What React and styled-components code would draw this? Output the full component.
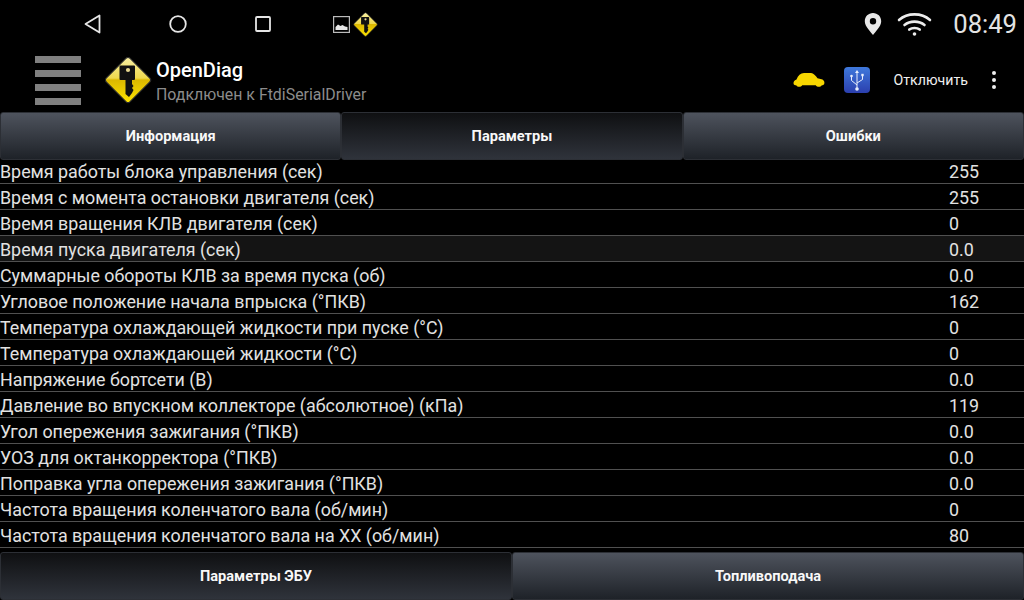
import { useId } from "react";
import styled, { createGlobalStyle } from "styled-components";

const params = [
  ["Время работы блока управления (сек)", "255"],
  ["Время с момента остановки двигателя (сек)", "255"],
  ["Время вращения КЛВ двигателя (сек)", "0"],
  ["Время пуска двигателя (сек)", "0.0", true],
  ["Суммарные обороты КЛВ за время пуска (об)", "0.0"],
  ["Угловое положение начала впрыска (°ПКВ)", "162"],
  ["Температура охлаждающей жидкости при пуске (°С)", "0"],
  ["Температура охлаждающей жидкости (°С)", "0"],
  ["Напряжение бортсети (В)", "0.0"],
  ["Давление во впускном коллекторе (абсолютное) (кПа)", "119"],
  ["Угол опережения зажигания (°ПКВ)", "0.0"],
  ["УОЗ для октанкорректора (°ПКВ)", "0.0"],
  ["Поправка угла опережения зажигания (°ПКВ)", "0.0"],
  ["Частота вращения коленчатого вала (об/мин)", "0"],
  ["Частота вращения коленчатого вала на ХХ (об/мин)", "80"],
];

const GlobalStyle = createGlobalStyle`
  html, body {
    margin: 0;
    padding: 0;
    background: #000;
  }
`;

const Screen = styled.div`
  width: 1024px;
  height: 600px;
  overflow: hidden;
  display: flex;
  flex-direction: column;
  background: #000;
  color: #fff;
  font-family: Roboto, "Liberation Sans", sans-serif;
`;

const StatusBar = styled.div`
  height: 48px;
  flex: none;
  display: flex;
  align-items: center;
  padding: 0 7px 0 84px;
  box-sizing: border-box;
`;

const NavGroup = styled.div`
  display: flex;
  align-items: center;
  gap: 68px;
`;

const Notifications = styled.div`
  display: flex;
  align-items: center;
  gap: 3px;
  margin-left: 62px;
`;

const StatusRight = styled.div`
  margin-left: auto;
  display: flex;
  align-items: center;
  gap: 15px;
`;

const Clock = styled.span`
  font-size: 25.6px;
  color: #e4e4e4;
  margin-left: 6px;
  line-height: 28px;
`;

const ActionBar = styled.div`
  height: 64px;
  flex: none;
  display: flex;
  align-items: center;
  padding: 0 28px 0 35px;
  box-sizing: border-box;
`;

const Burger = styled.div`
  width: 46px;
  display: flex;
  flex-direction: column;
  gap: 7px;
  margin-right: 23px;
`;

const BurgerBar = styled.div`
  height: 7px;
  background: #808080;
`;

const TitleBlock = styled.div`
  display: flex;
  flex-direction: column;
  margin-left: 4px;
  padding-top: 4px;
`;

const AppTitle = styled.div`
  font-size: 20px;
  font-weight: 500;
  line-height: 24px;
  color: #fff;
`;

const AppSubtitle = styled.div`
  font-size: 15.9px;
  line-height: 25px;
  color: #8c8c8c;
`;

const Actions = styled.div`
  margin-left: auto;
  display: flex;
  align-items: center;
  gap: 19px;
`;

const DisconnectLabel = styled.span`
  font-size: 14.2px;
  color: #f0f0f0;
  margin: 0 5px;
`;

const TabRow = styled.div`
  height: 48px;
  flex: none;
  display: grid;
  grid-template-columns: ${(p) => `repeat(${p.$count}, 1fr)`};
`;

const Tab = styled.div`
  display: flex;
  align-items: center;
  justify-content: center;
  border: 1px solid #2c2f35;
  border-radius: 3px;
  font-size: 14.6px;
  font-weight: 700;
  color: #f8f8f8;
  background: ${(p) =>
    p.$active
      ? "linear-gradient(to bottom, #0f1012, #2f333b)"
      : "linear-gradient(to bottom, #4e535d, #1e2228)"};
`;

const ParamList = styled.div`
  height: 388px;
  flex: none;
  overflow: hidden;
  display: flex;
  flex-direction: column;
  justify-content: flex-end;
  margin-bottom: 4px;
`;

const ParamRow = styled.div`
  height: 26px;
  flex: none;
  box-sizing: border-box;
  display: flex;
  align-items: center;
  padding-top: 1px;
  border-bottom: 1px solid #505050;
  background: ${(p) => (p.$highlight ? "#141414" : "transparent")};
  font-size: 17.85px;
  color: #e2e2e2;
  white-space: nowrap;
`;

const ParamName = styled.span`
  flex: 1;
`;

const ParamValue = styled.span`
  width: 75px;
`;

const DotsColumn = styled.div`
  display: flex;
  flex-direction: column;
  gap: 3px;
`;

const Dot = styled.div`
  width: 4px;
  height: 4px;
  border-radius: 50%;
  background: #eee;
`;

const KeyLogo = ({ size }) => {
  const id = useId();
  return (
    <svg width={size} height={size} viewBox="0 0 48 48">
      <defs>
        <linearGradient id={id} x1="0" y1="0" x2="1" y2="1">
          <stop offset="0" stopColor="#f7efa8" />
          <stop offset="0.46" stopColor="#efd94e" />
          <stop offset="0.5" stopColor="#dcb800" />
          <stop offset="1" stopColor="#ffe600" />
        </linearGradient>
      </defs>
      <rect x="7.2" y="7.2" width="33.6" height="33.6" rx="3" transform="rotate(45 24 24)" fill={`url(#${id})`} stroke="#2a2a2a" strokeWidth="1.2" />
      <path d="M15.5 10.5 Q15.5 9.5 16.5 9.5 H30 Q31 9.5 31 10.5 V23 Q31 24 30 24 H28 V28 L29.5 30 L28 32 L29.5 34 L28 37 L25 41 L21.5 38 V24 H16.5 Q15.5 24 15.5 23 Z" fill="#111" />
      <circle cx="24" cy="14" r="2.1" fill="#e8d890" />
    </svg>
  );
};

const BackIcon = () => (
  <svg width="17" height="20" viewBox="0 0 17 20">
    <path d="M15.5 1.5 V18.5 L1.5 10 Z" fill="none" stroke="#e6e6e6" strokeWidth="1.8" strokeLinejoin="round" />
  </svg>
);

const HomeIcon = () => (
  <svg width="18" height="18" viewBox="0 0 18 18">
    <circle cx="9" cy="9" r="7.8" fill="none" stroke="#e6e6e6" strokeWidth="1.8" />
  </svg>
);

const RecentIcon = () => (
  <svg width="16" height="16" viewBox="0 0 16 16">
    <rect x="1" y="1" width="14" height="14" rx="1" fill="none" stroke="#e6e6e6" strokeWidth="1.8" />
  </svg>
);

const PictureIcon = () => (
  <svg width="17" height="17" viewBox="0 0 17 17">
    <rect x="0.6" y="0.6" width="15.8" height="15.8" fill="none" stroke="#bbb" strokeWidth="1.2" />
    <path d="M2.5 14 V11 L5 8.5 L7.5 10 L9.5 9 L12 10.5 L14.5 11 V14 Z" fill="#e8e8e8" />
  </svg>
);

const PinIcon = () => (
  <svg width="18" height="24" viewBox="0 0 18 24">
    <path fillRule="evenodd" fill="#e8e8e8" d="M9 1 C4.3 1 .8 4.6 .8 9.2 C.8 14.5 6.6 19.6 9 23 C11.4 19.6 17.2 14.5 17.2 9.2 C17.2 4.6 13.7 1 9 1 Z M9 6 A3.2 3.2 0 1 1 9 12.4 A3.2 3.2 0 1 1 9 6 Z" />
  </svg>
);

const WifiIcon = () => (
  <svg width="35" height="24" viewBox="0 0 34 24" fill="none" stroke="#ececec" strokeWidth="2.6" strokeLinecap="round">
    <path d="M1.5 8 C10 0.5 24 0.5 32.5 8" />
    <path d="M7 13 C12.5 8.5 21.5 8.5 27 13" />
    <path d="M11.8 17.6 C14.5 15.4 19.5 15.4 22.2 17.6" />
    <circle cx="17" cy="22" r="1.8" fill="#ececec" stroke="none" />
  </svg>
);

const CarIcon = () => (
  <svg width="32" height="16" viewBox="0 0 32 16">
    <path d="M.6 12 C.2 10 1.2 8.4 3.5 7.6 C5 3.5 7.5 1.2 11 1 H18 C20.5 1.2 22.5 3.5 24.5 6.2 L29.5 7.4 C31.2 8.4 31.8 10.4 31.2 12 C30.8 13 29.8 13.2 28.8 13.2 C27.6 15.4 24 15.4 22.8 13.2 H9.2 C8 15.4 4.4 15.4 3.2 13.2 C2 13.2 .9 13 .6 12 Z" fill="#f7d600" />
  </svg>
);

const UsbIcon = () => {
  const id = useId();
  return (
    <svg width="26" height="26" viewBox="0 0 26 26">
      <defs>
        <linearGradient id={id} x1="0" y1="0" x2="0" y2="1">
          <stop offset="0" stopColor="#3f79dc" />
          <stop offset="1" stopColor="#2b3fae" />
        </linearGradient>
      </defs>
      <rect width="26" height="26" rx="4" fill={`url(#${id})`} />
      <g stroke="#e8eefc" strokeWidth="1" fill="none">
        <path d="M13 5 V22" />
        <path d="M13 18 L7.5 13.5 V10" />
        <path d="M13 16 L18.5 12.5 V9" />
      </g>
      <path d="M13 3 L15 6 H11 Z" fill="#e8eefc" />
      <circle cx="7.5" cy="9" r="1.3" fill="#e8eefc" />
      <rect x="17.3" y="6.8" width="2.4" height="2.4" fill="#e8eefc" />
      <circle cx="13" cy="22" r="1.8" fill="#e8eefc" />
    </svg>
  );
};

const App = () => {
  return (
    <Screen>
      <GlobalStyle />
      <StatusBar>
        <NavGroup>
          <BackIcon />
          <HomeIcon />
          <RecentIcon />
        </NavGroup>
        <Notifications>
          <PictureIcon />
          <KeyLogo size={25} />
        </Notifications>
        <StatusRight>
          <PinIcon />
          <WifiIcon />
          <Clock>08:49</Clock>
        </StatusRight>
      </StatusBar>
      <ActionBar>
        <Burger>
          <BurgerBar />
          <BurgerBar />
          <BurgerBar />
          <BurgerBar />
        </Burger>
        <KeyLogo size={48} />
        <TitleBlock>
          <AppTitle>OpenDiag</AppTitle>
          <AppSubtitle>Подключен к FtdiSerialDriver</AppSubtitle>
        </TitleBlock>
        <Actions>
          <CarIcon />
          <UsbIcon />
          <DisconnectLabel>Отключить</DisconnectLabel>
          <DotsColumn>
            <Dot />
            <Dot />
            <Dot />
          </DotsColumn>
        </Actions>
      </ActionBar>
      <TabRow $count={3}>
        <Tab>Информация</Tab>
        <Tab $active>Параметры</Tab>
        <Tab>Ошибки</Tab>
      </TabRow>
      <ParamList>
        {params.map(([name, value, highlight]) => (
          <ParamRow key={name} $highlight={highlight}>
            <ParamName>{name}</ParamName>
            <ParamValue>{value}</ParamValue>
          </ParamRow>
        ))}
      </ParamList>
      <TabRow $count={2}>
        <Tab $active>Параметры ЭБУ</Tab>
        <Tab>Топливоподача</Tab>
      </TabRow>
    </Screen>
  );
};

export default App;
